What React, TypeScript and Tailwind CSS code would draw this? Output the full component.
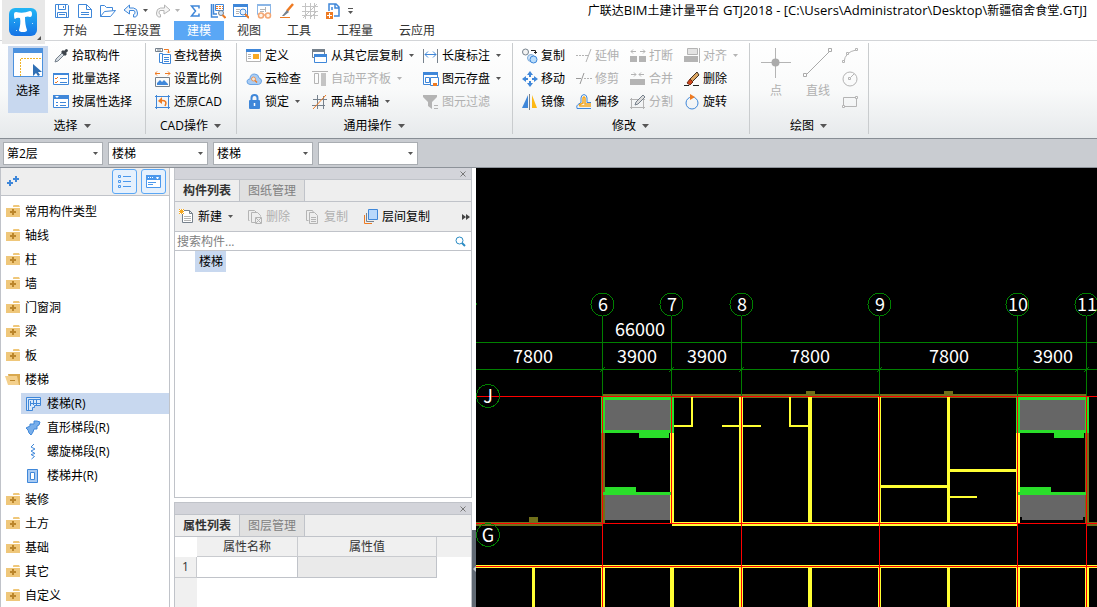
import type { ReactNode } from 'react';
import clsx from 'clsx';

const BLUE = '#3f87d9';
const GRAY = '#b4b4b4';
const SLATE = '#76818c';
const ORANGE = '#ee7a22';

type IconProps = {
  name: string;
  size?: number;
};

const icons: Record<string, ReactNode> = {
  save: (
    <g fill="none" stroke={BLUE}>
      <path d="M1.500 1.500h12l1 1v12h-13zM4.500 1.500v5h7v-5M3.500 14.500v-5h9v5M9.500 3v2M5 11.500h6" />
    </g>
  ),
  doc: <path fill="none" stroke={BLUE} d="M1.500 1.500h8l5 5v8h-13zM9.500 1.500v5h5M4 9.500h8M4 11.500h8" />,
  open: <path fill="none" stroke={BLUE} d="M.5 13.500v-11h4l2 2h6v3M.5 13.500l4-5 11-1-5 6z" />,
  undo: <path fill="#eef5fd" stroke={BLUE} d="M1 7l5.500-5v3h4q4 .5 4 5t-4 4v-2.500q2-.5 1.500-2.500t-2-1.500H6.500v3.500z" />,
  redo: <path fill="#f6f6f6" stroke={GRAY} d="M15 7L9.500 2v3h-4q-4 .5-4 5t4 4v-2.500q-2-.5-1.500-2.500t2-1.500h3v3.500z" />,
  sum: <path fill="none" stroke={BLUE} strokeWidth="1.500" d="M12 5.500V3H4.500L8.500 8l-4 5H12v-2.500" />,
  calc: (
    <>
      <path fill="none" stroke={BLUE} strokeWidth="1.500" d="M1.500 1v13H8M3.500 1v10H7" />
      <path fill="none" stroke={BLUE} d="M5.500 1.500h8v6h-8z" />
      <path stroke={ORANGE} strokeDasharray="2 1" d="M6 3.500h7M6 5.500h7" />
      <circle cx="11" cy="10" r="2.500" fill="#cfe4fa" stroke={SLATE} />
      <path stroke={ORANGE} strokeWidth="2" d="M12.500 12l3 3" />
    </>
  ),
  find: (
    <>
      <path fill="none" stroke={BLUE} d="M.5 1.500h14v12H.5z" />
      <path fill={BLUE} d="M0 1h15v3H0z" />
      <path stroke={GRAY} d="M3 6.500h4M3 8.500h3M3 10.500h3" />
      <circle cx="10" cy="9" r="3" fill="#e8f2fd" stroke={BLUE} />
      <path stroke={ORANGE} strokeWidth="2" d="M12 11l4 4" />
    </>
  ),
  glasses: (
    <>
      <path fill="none" stroke="#8bb6e6" d="M2 11.500h-.500v-10h13v10H14" />
      <path fill="#8bb6e6" d="M1 1h14v2H1z" />
      <path stroke={GRAY} d="M4 6.500h6M4 8.500h4M9.500 4v5" />
      <g fill="#fff4e8" stroke="#f3a673" strokeWidth="1.500">
        <circle cx="5" cy="12.500" r="2.500" />
        <circle cx="12" cy="12.500" r="2.500" />
        <path d="M7.500 12h2" />
      </g>
    </>
  ),
  brush: (
    <>
      <path stroke={ORANGE} strokeWidth="2.500" d="M14 1L8 8" />
      <path fill={SLATE} d="M8 7l2 2-5 4H3z" />
      <path stroke={ORANGE} d="M1 14.500h10" />
    </>
  ),
  mesh: (
    <path fill="none" stroke="#c4c4c4" d="M0 3.500h16M0 8.500h16M0 12.500h16M3.500 0v16M8.500 0v16M12.500 0v16M1 15L15 1M8 15l7-7" />
  ),
  addDoc: (
    <>
      <path fill="none" stroke={BLUE} strokeWidth="1.500" d="M4 8V1h7l3 3v9H9M7 4v3M10 1v4h4" />
      <path fill={ORANGE} d="M1 9h7v7H1z" />
      <path stroke="#fff" d="M4.500 10v5M2 12.500h5" />
    </>
  ),
  dropper: (
    <>
      <path fill="#d7dde3" stroke={SLATE} d="M2 14l1-3 6-6 2 2-6 6z" />
      <path fill="#3d444b" d="M8 4l2-2 1 1 2-2q2 0 2 2l-2 2 1 1-2 2z" />
    </>
  ),
  batch: (
    <>
      <path fill="#fff" stroke={BLUE} d="M.5 2.500h15v11H.5z" />
      <path fill={BLUE} d="M0 2h16v2H0z" />
      <path fill="none" stroke={ORANGE} d="M2 7l1 1 2-2M2 11l1 1 2-2" />
      <path stroke={BLUE} d="M7 7.500h7M7 11.500h7" />
    </>
  ),
  props: (
    <>
      <path fill="#fff" stroke={BLUE} d="M.5 1.500h15v12H.5z" />
      <path fill={BLUE} d="M0 1h16v4H0z" />
      <path fill="#fff" d="M2 2h4l-2 2z" />
      <path stroke={BLUE} d="M3 8.500h2M7 8.500h6M3 11.500h2M7 11.500h6" />
    </>
  ),
  replace: (
    <>
      <path fill="none" stroke={SLATE} d="M.5.5h7v3h-7zM3 .5v3M5 .5v3" />
      <path fill="none" stroke={ORANGE} d="M9 1.500h4.500V5M12 3.500l1.500 1.500L15 3.500" />
      <path fill="#fff" stroke={BLUE} d="M4.500 5.500h3v9h-3zM7.500 6.500h8v9h-8z" />
      <path stroke={BLUE} d="M9 9.500h5M9 11.500h5M9 13.500h5" />
    </>
  ),
  scale: (
    <>
      <path fill="none" stroke={ORANGE} d="M0 2.500h5M2 .5l-2 2 2 2M10 2.500h5M13 .5l2 2-2 2" />
      <path fill="none" stroke={SLATE} d="M.5 6.500h14v9H.5z" />
      <path fill={BLUE} d="M2 14v-2l3-3 2 2 2-2 4 4v1z" />
    </>
  ),
  restore: (
    <>
      <path fill="none" stroke={BLUE} d="M1.500 1v14M0 2.500h15M13.500 1v14M0 13.500h15" />
      <path fill="none" stroke={ORANGE} strokeWidth="1.500" d="M10 12q3-6-4-5.500" />
      <path fill={ORANGE} d="M3 7l4-4v7z" />
    </>
  ),
  define: (
    <>
      <path fill="#fff" stroke={GRAY} d="M.5 1.500h14v12H.5z" />
      <path fill={BLUE} d="M0 1h15v3H0z" />
      <path fill="#f7a823" d="M7 6h6v5H7z" />
      <path stroke={GRAY} d="M2 6.500h3M2 8.500h3M2 10.500h3" />
    </>
  ),
  cloud: (
    <>
      <path fill="#a8ccf4" stroke="#6ba4e4" d="M4 13.500Q.5 13 1 10q.5-2 3-2 0-5 4.500-5 4 0 4.500 4 2.500.5 2.500 3 0 3-3 3.500z" />
      <circle cx="7.500" cy="8" r="2" fill="#f7e6d5" stroke="#e8965a" />
      <path stroke={ORANGE} strokeWidth="1.500" d="M9 9.500l2 2" />
    </>
  ),
  lock: (
    <>
      <path fill="none" stroke={BLUE} strokeWidth="2" d="M5.500 8V4q0-3 3-3t3 3v4" />
      <rect x="3" y="6" width="11" height="9" rx="1" fill={BLUE} />
      <path stroke="#fff" strokeWidth="1.500" d="M8.500 9v3" />
    </>
  ),
  layers: (
    <>
      <path fill="#fff" stroke={SLATE} d="M.5 1.500h12v8H.5z" />
      <path fill={SLATE} d="M0 1h13v3H0z" />
      <path fill="#fff" stroke={BLUE} d="M2.500 6.500h12v8h-12z" />
      <path fill={BLUE} d="M2 6h13v3H2z" />
    </>
  ),
  flatten: (
    <>
      <path stroke={GRAY} d="M0 .5h16" />
      <path fill="none" stroke={GRAY} d="M2.500 2.500h4v10h-4z" />
      <path fill="#c4c4c4" d="M9 2h5v13H9z" />
    </>
  ),
  aux: (
    <>
      <path stroke={SLATE} d="M5.500 1v14M11.500 2v13M1 5.500h14M0 11.500h13" />
      <path stroke={ORANGE} d="M1 15L14 1" />
    </>
  ),
  length: (
    <>
      <path stroke={SLATE} d="M.5 1v14M14.500 1v14" />
      <path fill="none" stroke={BLUE} d="M2 6.500h11M5 3.500l-3 3 3 3M10 3.500l3 3-3 3" />
    </>
  ),
  saveEl: (
    <>
      <path fill="#fff" stroke={BLUE} d="M.5 2.500h14v11H.5zM2.500 6.500h4v5h-4z" />
      <path fill={BLUE} d="M0 1h15v3H0z" />
      <path fill="#fff" stroke={BLUE} d="M7.500 6.500h8v8h-8z" />
      <path fill={ORANGE} d="M10 12h4v3h-4z" />
    </>
  ),
  filter: (
    <>
      <path fill={GRAY} d="M0 1h14v2L9 8v7l-4-3V8L0 3z" />
      <path stroke={GRAY} d="M11 11.500h4M11 14.500h4" />
    </>
  ),
  copy: (
    <>
      <circle cx="3.500" cy="4" r="3" fill="#f3f3f3" stroke={SLATE} />
      <path fill="none" stroke="#222" d="M9 2.500h4.500V5M12 4l1.500 1.500L15 4" />
      <circle cx="9" cy="10" r="3.500" fill="#cfe4fa" stroke="#7ba9d8" />
      <circle cx="11.500" cy="11.500" r="3.500" fill="#b9dcfa" stroke={BLUE} />
    </>
  ),
  move: (
    <>
      <path stroke={BLUE} strokeWidth="2" d="M8 3v3M8 10v3M3 8h3M10 8h3" />
      <path fill={BLUE} d="M8 0l3 4H5zM8 16l3-4H5zM0 8l4-3v6zM16 8l-4-3v6z" />
    </>
  ),
  mirror: (
    <>
      <path fill={BLUE} d="M6 1v13H0z" />
      <path fill="#fdb813" d="M10 1v13h5z" />
      <path stroke={SLATE} d="M7.500 0v16" />
    </>
  ),
  extend: (
    <>
      <path stroke={GRAY} strokeDasharray="2 1" d="M0 7.500h9" />
      <path stroke={GRAY} d="M9 7.500h3M15 1l-5 13" />
    </>
  ),
  trim: (
    <>
      <path stroke="#999" d="M0 7.500h5M8 2L4 13" />
      <path stroke={GRAY} strokeDasharray="2 1" d="M8 7.500h8" />
    </>
  ),
  breakEl: (
    <>
      <path fill={GRAY} d="M0 8h7v6H0zM9 8h7v6H9z" />
      <path fill="none" stroke={GRAY} d="M1 3.500h5M3 1.500l-2 2 2 2M10 3.500h5M13 1.500l2 2-2 2" />
    </>
  ),
  merge: (
    <>
      <path fill={GRAY} d="M0 8h15v6H0z" />
      <path fill="none" stroke={GRAY} d="M1 3.500h5M4 1.500l2 2-2 2M9 3.500h5M11 1.500l-2 2 2 2" />
    </>
  ),
  split: (
    <>
      <path fill="none" stroke={GRAY} d="M1.500 5.500h12v8h-12zM0 5.500h15M0 13.500h15M1.500 4v11M13.500 4v11" />
      <path fill="#ddd" stroke={SLATE} d="M5 11l1-3 7-7 2 2-7 7z" />
    </>
  ),
  align: (
    <>
      <path fill="#e3e3e3" stroke={GRAY} d="M3.500.5h10v6h-10z" />
      <path fill={GRAY} d="M0 8h14v6H0z" />
      <path stroke={GRAY} d="M15.500 0v15" />
    </>
  ),
  erase: (
    <>
      <path fill="#dca763" stroke="#3d3024" d="M6 8l7-7 2 3-7 7z" />
      <path fill="#d1451b" stroke="#702d15" d="M3 12l3-4 3 3-3 3z" />
      <path stroke="#222" d="M0 14.500h5M9 14.500h6" />
    </>
  ),
  offset: (
    <>
      <path fill="none" stroke={BLUE} d="M15 14.500H1q-1-3 1-4l3-2V4q0-3 3-3.500 3 .5 3 3.500v4.500h4" />
      <path fill="none" stroke="#f5a820" strokeWidth="1.500" d="M15 12H4q-1-1 0-1.500L7 9V4q1-2 2 0v6h6" />
    </>
  ),
  rotate: (
    <>
      <circle cx="8" cy="9" r="6" fill="none" stroke={BLUE} />
      <path fill={ORANGE} d="M6 0l5 3-5 3z" />
    </>
  ),
  arc: (
    <g fill="#fff" stroke={GRAY}>
      <path fill="none" d="M2 14Q3 4 14 2" />
      <path d="M.5 12.500h2v2h-2zM4.500 4.500h2v2h-2zM13.500.5h2v2h-2z" />
    </g>
  ),
  circle: (
    <g fill="none" stroke={GRAY}>
      <circle cx="8" cy="8" r="7" />
      <path d="M6.500 6.500h2v2h-2zM9 6l3-3" />
    </g>
  ),
  rect: (
    <g fill="#fff" stroke={GRAY}>
      <path fill="none" d="M1.500 3.500h13v9h-13z" />
      <path d="M.5 11.500h2v2h-2zM13.500 2.500h2v2h-2z" />
    </g>
  ),
  newDoc: (
    <>
      <path fill="#fff" stroke={SLATE} d="M3.500 1.500h7l3 3v9h-10zM10.500 1.500v3h3" />
      <path stroke={GRAY} d="M5 7.500h7M5 9.500h7M5 11.500h7" />
      <path fill="#fff" d="M0 0h5v5H0z" />
      <path stroke="#f5a820" d="M0 2.500h5M2.500 0v5M0 0l5 5M5 0L0 5" />
    </>
  ),
  delDoc: (
    <g fill="none" stroke={GRAY}>
      <path d="M2.500 11.500h-1v-10h6l2 2M4.500 3.500h6l3 3v1M4.500 3.500v10h4" />
      <path d="M8.500 8.500h6v6h-6zM9 9l5 5M14 9l-5 5" />
    </g>
  ),
  copyDoc: (
    <path fill="none" stroke={GRAY} d="M3.500 11.500h-2v-10h6l1 2M4.500 3.500h5l3 3v8h-8zM6 8.500h5M6 10.500h5M6 12.500h5" />
  ),
  floorCopy: (
    <>
      <path fill="none" stroke={ORANGE} d="M1.500 6v8.500H9" />
      <path fill="none" stroke={SLATE} d="M3.500 4v8.500H11" />
      <path fill="#b8d8fb" stroke={BLUE} d="M5.500.5h9v10h-9z" />
    </>
  ),
  folder: (
    <>
      <path fill="#efc77a" d="M1 4h14v9H1zM8 2q0-1 1-1h5l1 2H8z" />
      <path stroke="#bb862c" strokeWidth="2" d="M8 5v6M5 8h6" />
    </>
  ),
  folderOpen: (
    <>
      <path fill="#d9a94f" d="M3 2h12v11H5z" />
      <path fill="#f4d08c" d="M0 4h12l2 9H3z" />
      <path stroke="#bb862c" d="M5 8.500h5" />
    </>
  ),
  stair: (
    <>
      <path fill="#d9e9fb" stroke={BLUE} d="M1.500 1.500h14v8h-6v2h-2v3h-6z" />
      <path fill="none" stroke={BLUE} d="M3.500 14V3.500H15M5.500 5v5M5.500 7.500h10M8.500 4v5M11.500 4v5" />
    </>
  ),
  flight: (
    <path fill="#78aeea" stroke={BLUE} d="M1 8l4-2 0-2 4 0 0-3h3l3 1-1 3-2 1v3l-3 0-1 3-2 3-2-2-1-3z" />
  ),
  spiral: <path fill="none" stroke={BLUE} d="M9 0L6 3l4 2-4 2 4 2.500-4 1 3.500 2-3 2.500" />,
  well: <path fill="#a9cbf3" stroke={BLUE} d="M2.500 1.500h10v13h-10z M5.500 4.500h4v7h-4z" fillRule="evenodd" />,
};

const Icon = ({ name, size = 16 }: IconProps) => (
  <svg width={size} height={size} viewBox="0 0 16 16" className="shrink-0" aria-hidden="true">
    {icons[name]}
  </svg>
);

const Caret = ({ muted, large }: { muted?: boolean; large?: boolean }) => (
  <svg
    width={large ? 7 : 5}
    height={large ? 4 : 3}
    viewBox="0 0 6 3"
    preserveAspectRatio="none"
    className="shrink-0"
    aria-hidden="true"
  >
    <path fill={muted ? GRAY : '#555'} d="M0 0h6L3 3z" />
  </svg>
);

type Tool = {
  icon: string;
  label: string;
  disabled?: boolean;
  menu?: boolean;
};

const ToolButton = ({ icon, label, disabled, menu }: Tool) => (
  <button
    type="button"
    disabled={disabled}
    className={clsx(
      'flex h-[23px] items-center gap-[3px] whitespace-nowrap',
      disabled ? 'text-[#b0b0b0]' : 'text-black'
    )}
  >
    <Icon name={icon} />
    <span>{label}</span>
    {menu && (
      <span className="ml-[3px]">
        <Caret muted={disabled} />
      </span>
    )}
  </button>
);

const ToolColumn = ({ tools, className }: { tools: Tool[]; className?: string }) => (
  <div className={clsx('flex shrink-0 flex-col', className)}>
    {tools.map((tool) => (
      <ToolButton key={tool.label} {...tool} />
    ))}
  </div>
);

type GroupProps = {
  title: string;
  className: string;
  children: ReactNode;
};

const RibbonGroup = ({ title, className, children }: GroupProps) => (
  <section className="flex shrink-0">
    <div className={clsx('flex flex-col', className)}>
      <div className="flex h-[72px] pt-[3px]">{children}</div>
      <button type="button" className="flex h-[25px] items-center justify-center gap-[6px] pr-px">
        {title}
        <Caret large />
      </button>
    </div>
    <div className="mt-[2px] mb-1 w-px bg-[#c9ccce]" />
  </section>
);

const selectTools: Tool[] = [
  { icon: 'dropper', label: '拾取构件' },
  { icon: 'batch', label: '批量选择' },
  { icon: 'props', label: '按属性选择' },
];

const cadTools: Tool[] = [
  { icon: 'replace', label: '查找替换' },
  { icon: 'scale', label: '设置比例' },
  { icon: 'restore', label: '还原CAD' },
];

const commonTools: Tool[][] = [
  [
    { icon: 'define', label: '定义' },
    { icon: 'cloud', label: '云检查' },
    { icon: 'lock', label: '锁定', menu: true },
  ],
  [
    { icon: 'layers', label: '从其它层复制', menu: true },
    { icon: 'flatten', label: '自动平齐板', menu: true, disabled: true },
    { icon: 'aux', label: '两点辅轴', menu: true },
  ],
  [
    { icon: 'length', label: '长度标注', menu: true },
    { icon: 'saveEl', label: '图元存盘', menu: true },
    { icon: 'filter', label: '图元过滤', disabled: true },
  ],
];

const editTools: Tool[][] = [
  [
    { icon: 'copy', label: '复制' },
    { icon: 'move', label: '移动' },
    { icon: 'mirror', label: '镜像' },
  ],
  [
    { icon: 'extend', label: '延伸', disabled: true },
    { icon: 'trim', label: '修剪', disabled: true },
    { icon: 'offset', label: '偏移' },
  ],
  [
    { icon: 'breakEl', label: '打断', disabled: true },
    { icon: 'merge', label: '合并', disabled: true },
    { icon: 'split', label: '分割', disabled: true },
  ],
  [
    { icon: 'align', label: '对齐', menu: true, disabled: true },
    { icon: 'erase', label: '删除' },
    { icon: 'rotate', label: '旋转' },
  ],
];

const Ribbon = () => (
  <div className="flex h-[98px] shrink-0 overflow-hidden border-b border-[#878d94] bg-linear-to-b from-white via-[#f9fafa] to-[#e6e9eb]">
    <RibbonGroup title="选择" className="w-[145px]">
      <button
        type="button"
        className="mt-[2px] ml-2 flex h-[67px] w-10 flex-col items-center gap-[5px] bg-[#c8d8ef] pt-[2px]"
      >
        <svg width="30" height="30" viewBox="0 0 30 30" aria-hidden="true">
          <path fill="#fff" stroke="#4b91de" d="M.5.5h29v28H.5z" />
          <path fill="#4b91de" d="M0 0h30v5H0z" />
          <path fill="none" stroke="#f0b429" strokeDasharray="2 1" d="M7.500 28V10.500H29" />
          <path fill="#2f6fb5" d="M20 16l9 8h-4l2 3-2 1-2-3-3 3z" />
        </svg>
        <span>选择</span>
      </button>
      <ToolColumn tools={selectTools} className="ml-[5px]" />
    </RibbonGroup>
    <RibbonGroup title="CAD操作" className="w-[90px]">
      <ToolColumn tools={cadTools} className="ml-[9px]" />
    </RibbonGroup>
    <RibbonGroup title="通用操作" className="w-[275px]">
      <ToolColumn tools={commonTools[0]} className="ml-[9px] w-[66px]" />
      <ToolColumn tools={commonTools[1]} className="w-[111px]" />
      <ToolColumn tools={commonTools[2]} />
    </RibbonGroup>
    <RibbonGroup title="修改" className="w-[236px]">
      <div className="flex pl-[9px]">
        {editTools.map((tools) => (
          <ToolColumn key={tools[0].label} tools={tools} className="w-[54px]" />
        ))}
      </div>
    </RibbonGroup>
    <RibbonGroup title="绘图" className="w-[118px]">
      <div className="flex gap-3 pt-1 pl-[11px] text-[#b0b0b0]">
        <button type="button" disabled className="flex w-[30px] flex-col items-center gap-[5px]">
          <svg width="30" height="30" viewBox="0 0 30 30" aria-hidden="true">
            <path stroke={GRAY} d="M14.500 0v30M0 14.500h30" />
            <circle cx="14.500" cy="14.500" r="4" fill="#aaa" />
          </svg>
          点
        </button>
        <button type="button" disabled className="flex w-[30px] flex-col items-center gap-[5px]">
          <svg width="30" height="30" viewBox="0 0 30 30" aria-hidden="true">
            <g fill="#fff" stroke="#aaa">
              <path d="M3 27L27 3" />
              <path d="M.5 25.500h3v3h-3zM25.500.5h3v3h-3z" />
            </g>
          </svg>
          直线
        </button>
      </div>
      <div className="ml-[9px] flex flex-col">
        {[
          ['arc', '圆弧'],
          ['circle', '圆'],
          ['rect', '矩形'],
        ].map(([icon, label]) => (
          <button key={icon} type="button" disabled aria-label={label} className="flex h-[23px] items-center">
            <Icon name={icon} />
          </button>
        ))}
      </div>
    </RibbonGroup>
  </div>
);

const tabs = ['开始', '工程设置', '建模', '视图', '工具', '工程量', '云应用'];

const quickTools: [string, string][] = [
  ['sum', '汇总'],
  ['calc', '查看工程量'],
  ['find', '查找'],
  ['glasses', '检查'],
  ['brush', '标记'],
  ['mesh', '网格'],
  ['addDoc', '添加'],
];

const QuickButton = ({ icon, label }: { icon: string; label: string }) => (
  <button type="button" aria-label={label} title={label} className="flex h-5 items-center">
    <Icon name={icon} />
  </button>
);

const Header = () => (
  <header className="flex h-[41px] shrink-0 border-b border-[#d3d5d8] bg-white pl-[2px]">
    <button type="button" aria-label="菜单" className="z-10 flex h-[44px] w-[43px] shrink-0 bg-[#e8e8e8]">
      <svg width="43" height="44" viewBox="0 0 43 44" aria-hidden="true">
        <defs>
          <linearGradient id="logo" x1="0" y1="0" x2="0" y2="1">
            <stop offset="0" stopColor="#22b6f5" />
            <stop offset="1" stopColor="#1573e6" />
          </linearGradient>
        </defs>
        <rect x="7" y="8" width="28" height="28" rx="6" fill="url(#logo)" />
        <path
          fill="#fff"
          d="M12 14q0-2 2-2 7 2 14-1 2 0 2 3 0 3-2 3-2-1-5 0 0 8 2 13 0 2-4 2t-4-2q2-7 1-12-3-1-5 1-1 0-1-5z"
        />
        <path fill="#bfe4ff" d="M12 22h1v1h-1zM30 23h1v1h-1zM14 30h1v1h-1z" />
        <path fill="#555" d="M39 36v4h-4z" />
      </svg>
    </button>
    <div className="flex min-w-0 flex-1 flex-col">
      <div className="flex h-[22px] items-center">
        <div className="flex shrink-0 items-center gap-[7px] pl-[9px]">
          <QuickButton icon="save" label="保存" />
          <QuickButton icon="doc" label="新建工程" />
          <QuickButton icon="open" label="打开" />
          <div className="flex items-center gap-1">
            <QuickButton icon="undo" label="撤销" />
            <Caret />
          </div>
          <div className="flex items-center gap-1">
            <QuickButton icon="redo" label="恢复" />
            <Caret muted />
          </div>
          {quickTools.map(([icon, label]) => (
            <QuickButton key={icon} icon={icon} label={label} />
          ))}
          <button type="button" aria-label="自定义" className="flex flex-col gap-[2px]">
            <span className="h-px w-[5px] bg-[#555]" />
            <Caret />
          </button>
        </div>
        <h1 className="ml-auto pr-[10px] whitespace-nowrap text-black">
          广联达<span className="text-[13px]">BIM</span>土建计量平台
          <span className="text-[13px]"> GTJ2018 - [C:\Users\Administrator\Desktop\</span>
          新疆宿舍食堂<span className="text-[13px]">.GTJ]</span>
        </h1>
      </div>
      <nav className="flex h-[19px] pl-[5px]">
        {tabs.map((tab) => (
          <button
            key={tab}
            type="button"
            className={clsx(
              'px-[13px] pt-px whitespace-nowrap',
              tab === '建模' ? 'bg-[#5aa7f5] text-white' : 'text-[#333]'
            )}
          >
            {tab}
          </button>
        ))}
      </nav>
    </div>
  </header>
);

const selectors = [
  { label: '楼层', value: '第2层' },
  { label: '构件类别', value: '楼梯' },
  { label: '构件类型', value: '楼梯' },
  { label: '构件名称', value: '' },
];

const SelectorBar = () => (
  <div className="flex h-[29px] shrink-0 items-center gap-[5px] border-b border-[#8d9299] bg-[#c9ccd1] pl-[3px]">
    {selectors.map(({ label, value }) => (
      <div key={label} className="relative h-[23px] w-[100px] border border-[#a9adb2] bg-white">
        <select
          aria-label={label}
          defaultValue={value}
          className="h-full w-full appearance-none bg-transparent pt-px pl-[3px] text-black outline-none"
        >
          <option>{value}</option>
        </select>
        <span className="pointer-events-none absolute top-[9px] right-1 flex">
          <Caret />
        </span>
      </div>
    ))}
  </div>
);

type TreeItem = {
  label: string;
  icon?: string;
  children?: TreeItem[];
};

const tree: TreeItem[] = [
  { label: '常用构件类型' },
  { label: '轴线' },
  { label: '柱' },
  { label: '墙' },
  { label: '门窗洞' },
  { label: '梁' },
  { label: '板' },
  {
    label: '楼梯',
    children: [
      { label: '楼梯(R)', icon: 'stair' },
      { label: '直形梯段(R)', icon: 'flight' },
      { label: '螺旋梯段(R)', icon: 'spiral' },
      { label: '楼梯井(R)', icon: 'well' },
    ],
  },
  { label: '装修' },
  { label: '土方' },
  { label: '基础' },
  { label: '其它' },
  { label: '自定义' },
];

const CategoryTree = () => (
  <aside className="flex w-[170px] shrink-0 flex-col overflow-hidden border-x border-[#c0c3c9] bg-white">
    <div className="flex h-[28px] shrink-0 items-center border-b border-[#c0c3c9] bg-[#eee] pr-[3px] pl-[6px]">
      <button type="button" aria-label="展开">
        <svg width="12" height="11" viewBox="0 0 12 11" aria-hidden="true">
          <path stroke={BLUE} strokeWidth="2" d="M3 4v6M0 7h6M9 0v6M6 3h6" />
        </svg>
      </button>
      <div className="ml-auto flex gap-1">
        <button
          type="button"
          aria-label="列表视图"
          className="flex size-[25px] items-center justify-center rounded-[3px] border border-[#5aa7f5] bg-[#e6f1fd]"
        >
          <svg width="13" height="13" viewBox="0 0 13 13" fill="none" stroke="#4b98ec" aria-hidden="true">
            <path d="M.5.5h2v2h-2zM.5 5.500h2v2h-2zM.5 10.500h2v2h-2zM5 1.500h8M5 6.500h8M5 11.500h8" />
          </svg>
        </button>
        <button
          type="button"
          aria-label="面板视图"
          className="flex size-[25px] items-center justify-center rounded-[3px] border border-[#5aa7f5] bg-[#e6f1fd]"
        >
          <svg width="15" height="13" viewBox="0 0 15 13" aria-hidden="true">
            <path fill="#fff" stroke="#4b98ec" d="M.5.5h14v12H.5z" />
            <path fill="#4b98ec" d="M0 0h15v5H0z" />
            <path stroke="#fff" strokeDasharray="1 1" d="M2 2.500h5" />
            <path fill="#fff" d="M10 2h3l-1 2h-1z" />
            <path stroke="#4b98ec" d="M2 7.500h8M2 9.500h5" />
          </svg>
        </button>
      </div>
    </div>
    <ul className="pt-1 text-black">
      {tree.map((item) => (
        <li key={item.label}>
          <button type="button" className="flex h-6 w-full items-center gap-1 pl-1">
            <Icon name={item.children ? 'folderOpen' : 'folder'} />
            {item.label}
          </button>
          {item.children && (
            <ul className="pl-5">
              {item.children.map((child, index) => (
                <li key={child.label} className="h-6 pt-px">
                  <button
                    type="button"
                    className={clsx(
                      'flex h-[21px] w-full items-center gap-[6px] pl-1',
                      index === 0 && 'bg-[#c8d8ef]'
                    )}
                  >
                    <Icon name={child.icon!} />
                    {child.label}
                  </button>
                </li>
              ))}
            </ul>
          )}
        </li>
      ))}
    </ul>
  </aside>
);

type DockProps = {
  tabs: [string, string];
  className: string;
  children: ReactNode;
};

const DockPanel = ({ tabs, className, children }: DockProps) => (
  <section className={clsx('flex flex-col border border-[#c0c3c9] bg-white', className)}>
    <div className="flex h-[11px] shrink-0 items-center justify-end bg-[#d3d4da] pr-[5px]">
      <button type="button" aria-label="关闭">
        <svg width="6" height="6" viewBox="0 0 6 6" className="block" aria-hidden="true">
          <path stroke="#777" d="M.5.5l5 5M5.500.5l-5 5" />
        </svg>
      </button>
    </div>
    <div className="flex h-[23px] shrink-0 border-y border-[#c0c3c9] bg-[#eee]">
      <button type="button" className="w-[65px] border-r border-[#c0c3c9] font-bold text-[#333]">
        {tabs[0]}
      </button>
      <button type="button" className="w-[65px] border-r border-[#c0c3c9] bg-[#e0e0e0] text-[#808080]">
        {tabs[1]}
      </button>
    </div>
    {children}
  </section>
);

const ComponentPanel = () => (
  <DockPanel tabs={['构件列表', '图纸管理']} className="min-h-0 flex-1 border-t-0">
    <div className="flex h-[30px] shrink-0 items-center border-b border-[#c0c3c9] bg-[#eee] pl-1">
      <div className="w-[68px]">
        <ToolButton icon="newDoc" label="新建" menu />
      </div>
      <div className="w-[58px]">
        <ToolButton icon="delDoc" label="删除" disabled />
      </div>
      <div className="w-[58px]">
        <ToolButton icon="copyDoc" label="复制" disabled />
      </div>
      <ToolButton icon="floorCopy" label="层间复制" />
      <button type="button" aria-label="更多" className="ml-auto pr-px">
        <svg width="8" height="6" viewBox="0 0 8 6" aria-hidden="true">
          <path fill="#444" d="M0 0l4 3-4 3zM4 0l4 3-4 3z" />
        </svg>
      </button>
    </div>
    <div className="flex h-[19px] shrink-0 items-center border-b border-[#c0c3c9] pr-[5px] pl-[2px]">
      <input
        type="text"
        aria-label="搜索构件"
        placeholder="搜索构件..."
        className="min-w-0 flex-1 pt-px outline-none placeholder:text-[#808080]"
      />
      <button type="button" aria-label="搜索">
        <svg width="11" height="11" viewBox="0 0 11 11" className="block" aria-hidden="true">
          <circle cx="4.500" cy="4.500" r="3.500" fill="none" stroke="#2b8cc4" />
          <path stroke="#2b8cc4" strokeWidth="2" d="M7 7l3 3" />
        </svg>
      </button>
    </div>
    <div className="pl-5">
      <button type="button" className="block h-[21px] bg-[#c8d8ef] pr-[3px] pl-1 text-black">
        楼梯
      </button>
    </div>
  </DockPanel>
);

const PropertyPanel = () => (
  <DockPanel tabs={['属性列表', '图层管理']} className="h-[105px] shrink-0 border-b-0">
    <table className="w-full flex-1 table-fixed border-separate border-spacing-0 text-[#333]">
      <colgroup>
        <col className="w-[22px]" />
        <col className="w-[101px]" />
        <col className="w-[139px]" />
        <col />
      </colgroup>
      <thead>
        <tr className="h-5">
          <td />
          <th className="border-r border-b border-[#c9cbcf] bg-[#f0f0f0] p-0 font-normal">属性名称</th>
          <th className="border-r border-b border-[#c9cbcf] bg-[#f0f0f0] p-0 font-normal">属性值</th>
          <td className="bg-[#f0f0f0]" />
        </tr>
      </thead>
      <tbody>
        <tr className="h-[21px]">
          <th className="border-r border-b border-[#c9cbcf] bg-[#f0f0f0] p-0 font-normal">1</th>
          <td className="border-r border-b border-[#c0c3c9]" />
          <td className="border-r border-b border-[#c0c3c9] bg-[#eaeaea]" />
          <td />
        </tr>
        <tr>
          <td className="bg-[#f0f0f0]" />
          <td colSpan={3} />
        </tr>
      </tbody>
    </table>
  </DockPanel>
);

type Box = [x: number, y: number, w: number, h: number];

const outerWalls: Box[] = [
  [602, 394, 485, 4],
  [806, 391, 9, 3],
  [944, 391, 9, 3],
  [601, 432, 4, 91],
  [476, 522, 126, 4],
  [529, 517, 9, 5],
  [1085, 432, 4, 91],
  [1087, 522, 10, 4],
];

const innerWalls: Box[] = [
  [670, 432, 4, 92],
  [672, 522, 345, 4],
  [739, 397, 4, 126],
  [691, 397, 2, 30],
  [674, 425, 19, 2],
  [722, 425, 39, 2],
  [789, 397, 2, 30],
  [789, 425, 20, 2],
  [808, 397, 4, 126],
  [878, 397, 3, 126],
  [947, 397, 3, 126],
  [881, 485, 66, 3],
  [950, 469, 67, 3],
  [950, 496, 27, 2],
  [1016, 432, 4, 91],
  [476, 565, 621, 3],
  [532, 568, 3, 39],
  [601, 568, 4, 39],
  [670, 568, 4, 39],
  [739, 568, 4, 39],
  [808, 568, 4, 39],
  [878, 568, 3, 39],
  [947, 568, 3, 39],
  [1016, 568, 4, 39],
  [1085, 568, 4, 39],
];

const stairBeams: Box[] = [
  [601, 397, 73, 36],
  [639, 433, 30, 5],
  [605, 487, 31, 5],
  [603, 492, 69, 3],
  [1016, 397, 73, 36],
  [1054, 433, 30, 5],
  [1020, 487, 31, 5],
  [1018, 492, 68, 3],
];

const stairSlabs: Box[] = [
  [605, 400, 65, 30],
  [605, 495, 65, 25],
  [1020, 400, 65, 30],
  [1020, 495, 65, 22],
  [1022, 517, 61, 3],
];

const gridLines: Box[] = [
  [476, 396, 621, 1],
  [476, 523, 621, 1],
  [476, 566, 621, 1],
  [602, 396, 1, 211],
  [671, 396, 1, 128],
  [741, 396, 1, 211],
  [879, 396, 1, 211],
  [1017, 396, 1, 211],
  [1086, 396, 1, 211],
];

const axes = [
  { name: '6', x: 602 },
  { name: '7', x: 671 },
  { name: '8', x: 741 },
  { name: '9', x: 879 },
  { name: '10', x: 1017 },
  { name: '11', x: 1086 },
];

const rowAxes = [
  { name: 'J', y: 396 },
  { name: 'G', y: 535 },
];

const dimensions = [
  { text: '66000', x: 640, y: 336 },
  { text: '7800', x: 533, y: 363 },
  { text: '3900', x: 637, y: 363 },
  { text: '3900', x: 707, y: 363 },
  { text: '7800', x: 810, y: 363 },
  { text: '7800', x: 949, y: 363 },
  { text: '3900', x: 1053, y: 363 },
];

const Boxes = ({ items, fill }: { items: Box[]; fill: string }) => (
  <g fill={fill}>
    {items.map(([x, y, width, height]) => (
      <rect key={`${x}-${y}-${width}`} x={x} y={y} width={width} height={height} />
    ))}
  </g>
);

const PlanView = () => (
  <main className="min-w-0 flex-1 overflow-hidden bg-black">
    <svg
      width="621"
      height="439"
      viewBox="476 168 621 439"
      role="img"
      aria-label="平面图"
      className="block font-['Noto_Sans_CJK_SC',sans-serif] text-[18px]"
    >
      <Boxes items={outerWalls} fill="#70701a" />
      <Boxes items={innerWalls} fill="#ffff33" />
      <Boxes items={stairBeams} fill="#2ade2a" />
      <Boxes items={stairSlabs} fill="#666666" />
      <g fill="#008000">
        <rect x="476" y="342" width="621" height="1" />
        <rect x="476" y="369" width="621" height="1" />
        <rect x="476" y="303" width="1" height="2" />
        {axes.map(({ name, x }) => (
          <rect key={name} x={x} y="316" width="1" height="80" />
        ))}
      </g>
      <Boxes items={gridLines} fill="#ff0000" />
      <g fill="none" stroke="#008000" shapeRendering="crispEdges">
        {axes.map(({ name, x }) => (
          <g key={name}>
            <circle cx={x + 0.5} cy="304.500" r="11.500" />
            <path d={`M${x - 2} 372l5-5`} />
          </g>
        ))}
        {rowAxes.map(({ name, y }) => (
          <circle key={name} cx="488" cy={y} r="11.500" />
        ))}
      </g>
      <g fill="#fff" textAnchor="middle">
        {axes.map(({ name, x }) => (
          <text key={name} x={x + 1} y="311">
            {name}
          </text>
        ))}
        {rowAxes.map(({ name, y }) => (
          <text key={name} x="488" y={y + 7}>
            {name}
          </text>
        ))}
        {dimensions.map(({ text, x, y }) => (
          <text key={`${text}-${x}`} x={x} y={y}>
            {text}
          </text>
        ))}
      </g>
    </svg>
  </main>
);

export default function App() {
  return (
    <div className="flex h-screen flex-col overflow-hidden bg-white font-['Open_Sans','Noto_Sans_CJK_SC',sans-serif] text-[12px] leading-4">
      <Header />
      <Ribbon />
      <SelectorBar />
      <div className="flex min-h-0 flex-1">
        <CategoryTree />
        <div className="ml-1 flex w-[298px] shrink-0 flex-col gap-1">
          <ComponentPanel />
          <PropertyPanel />
        </div>
        <div className="flex w-1 shrink-0 flex-col justify-end">
          <button
            type="button"
            aria-label="折叠面板"
            className="flex h-[77px] items-center justify-center bg-[#616a74]"
          >
            <svg width="3" height="6" viewBox="0 0 3 6" aria-hidden="true">
              <path fill="#c5cad0" d="M3 0v6L0 3z" />
            </svg>
          </button>
        </div>
        <PlanView />
      </div>
    </div>
  );
}
